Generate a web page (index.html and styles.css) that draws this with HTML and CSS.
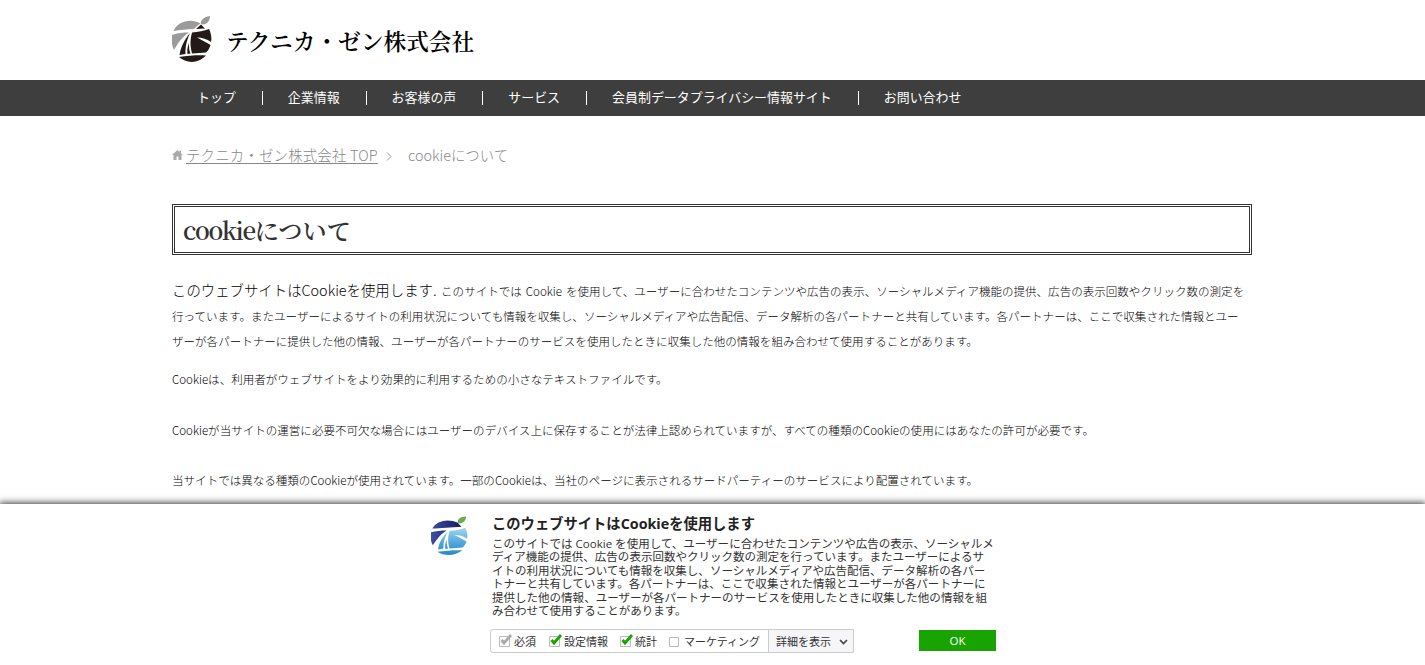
FILE: index.html
```html
<!DOCTYPE html>
<html lang="ja">
<head>
<meta charset="utf-8">
<title>cookieについて</title>
<link rel="stylesheet" href="styles.css">
</head>
<body>
<header class="header">
  <div class="inner brand">
    <svg class="brand-mark" viewBox="0 0 40 48" width="40" height="48">
      <path fill="#9b9b9b" d="M29 9C28 5 32 2 38 1C38 6 35 9 31 9.500Z"/>
      <path fill="#9b9b9b" d="M1.500 16C6 6 19 3 28.500 8.500C26 10 24 12 22 14C15 14 8 15 1.500 16ZM0 20C5 18 11 17.500 17 17.500C10 22 6 28 2 35C-.5 30-1 24 0 20Z"/>
      <path fill="#231a18" d="M24 14L29 9.500 33 13.500ZM20 17.500C26 17 32 16 37 14C39 18 40 23 39 27C35 24 30 22.500 25 22.500C30 25 35 28 38.500 30C37 34 36 36 34 37.500L20 38.500C18 31 18 25 20 17.500ZM18 18C15 25 13 31 13.500 39L7.500 40C9 31 13 24 18 18ZM17 28C15.500 32 15 35 15.500 39L18.500 38.500C17 35 17 32 17 28ZM7 42C17 40.500 27 40 34 40.500C26 49 14 48.500 7 42Z"/>
    </svg>
    <span class="brand-name">テクニカ・ゼン株式会社</span>
  </div>
</header>
<nav class="nav">
  <ul class="inner nav-list">
    <li>トップ</li><li>企業情報</li><li>お客様の声</li><li>サービス</li><li>会員制データプライバシー情報サイト</li><li>お問い合わせ</li>
  </ul>
</nav>
<main class="inner">
  <div class="crumbs">
    <svg class="home" viewBox="0 0 11 10" width="11" height="10"><path fill="#aaa" d="M0 5L5.500 0 7.500 2V.8H9V3.300L11 5H9.500V10H6.500V6.500H4.500V10H1.500V5Z"/></svg>
    <a class="crumb-link">テクニカ・ゼン株式会社 TOP</a>
    <svg class="chevron" viewBox="0 0 6 9" width="6" height="9"><path d="M1 .5L5 4.500 1 8.500" fill="none" stroke="#999"/></svg>
    <span>cookieについて</span>
  </div>
  <h1 class="title"><span class="title-latin">cookie</span>について</h1>
  <div class="article">
    <p class="lead"><span class="big">このウェブサイトはCookieを使用します.</span> <span class="intro">このサイトでは Cookie を使用して、ユーザーに合わせたコンテンツや広告の表示、ソーシャルメディア機能の提供、広告の表示回数やクリック数の測定を</span><br>行っています。またユーザーによるサイトの利用状況についても情報を収集し、ソーシャルメディアや広告配信、データ解析の各パートナーと共有しています。各パートナーは、ここで収集された情報とユー<br>ザーが各パートナーに提供した他の情報、ユーザーが各パートナーのサービスを使用したときに収集した他の情報を組み合わせて使用することがあります。</p>
    <p>Cookieは、利用者がウェブサイトをより効果的に利用するための小さなテキストファイルです。</p>
    <p>Cookieが当サイトの運営に必要不可欠な場合にはユーザーのデバイス上に保存することが法律上認められていますが、すべての種類のCookieの使用にはあなたの許可が必要です。</p>
    <p>当サイトでは異なる種類のCookieが使用されています。一部のCookieは、当社のページに表示されるサードパーティーのサービスにより配置されています。</p>
  </div>
</main>
<section class="consent">
  <svg class="consent-mark" viewBox="0 0 40 42" width="37" height="40">
    <defs>
      <linearGradient id="sea" x1="0" y1="0" x2="0" y2="1"><stop offset="0" stop-color="#a5d5ef"/><stop offset=".6" stop-color="#4aa3d8"/><stop offset="1" stop-color="#238bc6"/></linearGradient>
      <linearGradient id="sky" x1="0" y1="0" x2="1" y2="0"><stop offset="0" stop-color="#3f4fa5"/><stop offset="1" stop-color="#151a5f"/></linearGradient>
    </defs>
    <path fill="#6eac45" d="M29 7C28 3 32 0 38 0C38 4 35 7 31 7.500Z"/>
    <path fill="url(#sky)" d="M1.500 13C6 4 19 2 28.500 6.500L33 11C22 12 10 12.500 1.500 13ZM0 17C5 15.500 11 15 17 15C10 19 6 25 2 31C-.5 27-1 21 0 17Z"/>
    <path fill="url(#sea)" d="M20 15.500C26 15 32 14 37 12C39 16 40 20 39 24C35 21 30 20 25 20C30 22 35 25 38.500 27C37 30 36 32 34 33.500L20 34.500C18 28 18 22 20 15.500ZM18 16C15 22 13 28 13.500 34.500L7.500 35.500C9 27 13 21 18 16ZM17 25C15.500 28 15 31 15.500 35L18.500 34.500C17 31 17 28 17 25ZM7 38C17 36.500 27 36 34 36.500C26 43 14 43 7 38Z"/>
  </svg>
  <div class="consent-body">
    <h2 class="consent-title">このウェブサイトはCookieを使用します</h2>
    <p class="consent-text">このサイトでは Cookie を使用して、ユーザーに合わせたコンテンツや広告の表示、ソーシャルメ<br>ディア機能の提供、広告の表示回数やクリック数の測定を行っています。またユーザーによるサ<br>イトの利用状況についても情報を収集し、ソーシャルメディアや広告配信、データ解析の各パー<br>トナーと共有しています。各パートナーは、ここで収集された情報とユーザーが各パートナーに<br>提供した他の情報、ユーザーが各パートナーのサービスを使用したときに収集した他の情報を組<br>み合わせて使用することがあります。</p>
    <div class="controls">
      <div class="options">
        <span class="option need"><svg class="box" viewBox="0 0 14 13" width="14" height="13"><path class="frame" d="M.5 2.500H10.500V12.500H.5Z"/><path d="M2.500 6L5 9 12 1" fill="none" stroke="#aaa" stroke-width="2.800"/></svg>必須</span>
        <span class="option pref"><svg class="box" viewBox="0 0 14 13" width="14" height="13"><path class="frame" d="M.5 2.500H10.500V12.500H.5Z"/><path d="M2.500 6L5 9 12 1" fill="none" stroke="#18a300" stroke-width="2.800"/></svg>設定情報</span>
        <span class="option stat"><svg class="box" viewBox="0 0 14 13" width="14" height="13"><path class="frame" d="M.5 2.500H10.500V12.500H.5Z"/><path d="M2.500 6L5 9 12 1" fill="none" stroke="#18a300" stroke-width="2.800"/></svg>統計</span>
        <span class="option"><svg class="box" viewBox="0 0 14 13" width="14" height="13"><path class="frame" d="M1.500 3.500H10.500V12.500H1.500Z"/></svg><span class="marketing">マーケティング</span></span>
        <span class="details">詳細を表示<svg viewBox="0 0 9 6" width="9" height="6"><path d="M1 1L4.500 4.500 8 1" fill="none" stroke="#444" stroke-width="1.700"/></svg></span>
      </div>
      <span class="ok">OK</span>
    </div>
  </div>
</section>
</body>
</html>
```
FILE: styles.css
```css
* { box-sizing: border-box; }
body {
  margin: 0;
  height: 665px;
  overflow: hidden;
  background: #fff;
  color: #222;
  font-family: "Noto Sans CJK JP", sans-serif;
  white-space: nowrap;
}
.inner { width: 1080px; margin-left: 172px; }
.header { height: 80px; }
.brand { display: flex; padding-top: 15px; }
.brand-name {
  margin: 8px 0 0 14px;
  font: 600 22.7px/34px "Noto Serif CJK JP", "Noto Sans CJK JP", serif;
  color: #000;
}
.nav { height: 36px; background: #3e3e3e; }
.nav-list {
  display: flex;
  align-items: center;
  height: 36px;
  padding: 0;
  margin-top: 0;
  margin-bottom: 0;
  list-style: none;
  color: #fff;
  font-size: 12.95px;
  font-weight: 400;
  line-height: 12px;
}
.nav-list li {
  height: 14px;
  padding: 0 26px 0 25px;
  border-right: 1px solid #fff;
}
.nav-list li:last-child { border: 0; }
.crumbs {
  display: flex;
  align-items: center;
  height: 24px;
  margin-top: 27px;
  color: #888;
  font-size: 14.4px;
  font-weight: 300;
  line-height: 24px;
}
.home { margin-right: 3px; }
.crumb-link {
  width: 192px;
  letter-spacing: .2px;
  text-decoration: underline;
  text-underline-offset: 2px;
}
.chevron { margin: 3px 16px 0 8px; }
.title {
  height: 51px;
  margin: 37px 0 0;
  padding-left: 8px;
  border: 3px double #333;
  color: #333;
  font: 600 24.2px/45px "Noto Serif CJK JP", "Noto Sans CJK JP", serif;
}
.title-latin { letter-spacing: -1.4px; }
.article { padding-top: 22px; color: #000; font-size: 11.54px; font-weight: 300; line-height: 25px; }
.article p { margin: 0 0 25.500px; }
.article .lead { margin-bottom: 13px; }
.big { font-size: 14.4px; }
.intro { margin-left: 2px; word-spacing: 1.500px; }
.consent {
  position: absolute;
  left: 0;
  right: 0;
  top: 504px;
  height: 161px;
  display: flex;
  padding-left: 431px;
  background: #fff;
  box-shadow: 0 0 7px 1px #333;
  color: #222;
  font-family: "Open Sans", "Noto Sans CJK JP", sans-serif;
}
.consent-mark { margin-top: 12px; margin-right: 23px; }
.consent-body { width: 505px; padding-top: 9px; }
.consent-title { margin: 0 0 0 1px; font-size: 14.3px; line-height: 21px; font-weight: 700; }
.consent-text { margin: 3px 0 0 1px; font-size: 11.52px; line-height: 13.4px; color: #333; }
.controls { display: flex; justify-content: space-between; margin-top: 12px; margin-left: -1px; }
.options {
  display: flex;
  align-items: center;
  width: 364px;
  height: 24px;
  padding-left: 8px;
  border: 1px solid #ccc;
  border-radius: 3px 0 0 3px;
  font-size: 11px;
  line-height: 22px;
  color: #333;
}
.option { display: flex; align-items: center; padding-top: 1px; }
.box { margin: -3px 1px 0 0; }
.frame { fill: #fff; stroke: #bbb; }
.need { width: 50px; }
.pref { width: 71px; }
.stat { width: 48px; }
.marketing { margin-left: 1px; }
.details {
  display: flex;
  align-items: center;
  gap: 8px;
  height: 22px;
  margin-left: auto;
  padding: 1px 5px 0 7px;
  border-left: 1px solid #ccc;
  background: #f6f6f9;
}
.ok {
  width: 77px;
  height: 21px;
  margin-top: 1px;
  background: #18a300;
  color: #fff;
  font-size: 11.5px;
  line-height: 22px;
  text-align: center;
}
```
